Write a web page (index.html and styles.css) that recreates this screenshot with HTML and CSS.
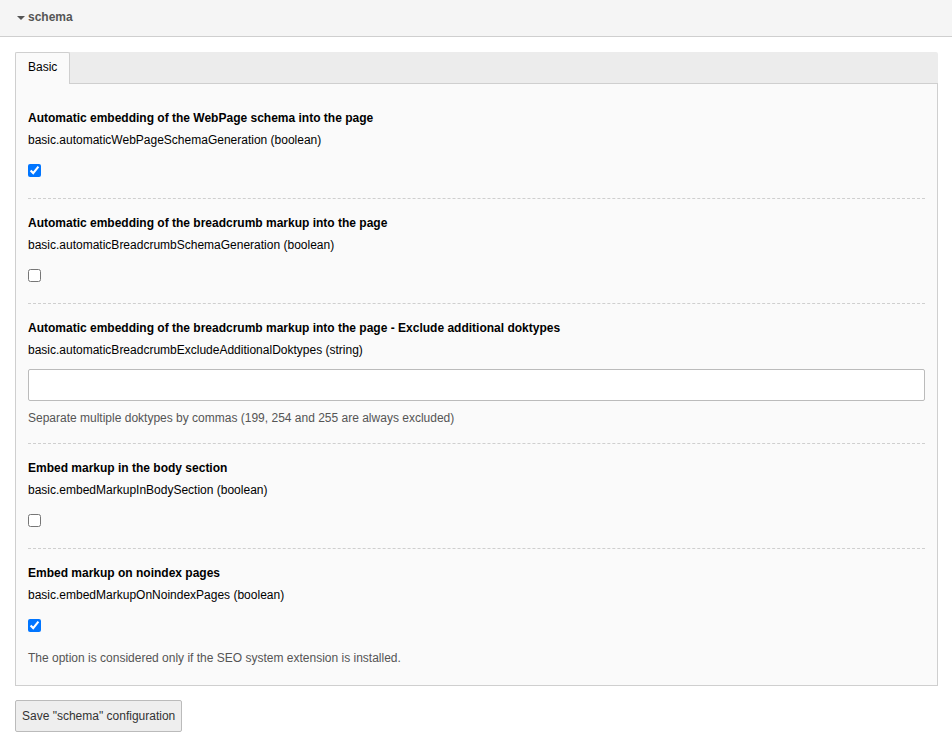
FILE: index.html
```html
<!DOCTYPE html>
<html>
<head>
<meta charset="utf-8">
<link rel="stylesheet" href="styles.css">
</head>
<body>
<div class="header"><span class="caret"></span><span class="header-title">schema</span></div>
<div class="main">
  <div class="tabs">
    <div class="tab-strip"><div class="tab">Basic</div></div>
    <div class="panel">
      <div class="section">
        <div class="title">Automatic embedding of the WebPage schema into the page</div>
        <div class="name">basic.automaticWebPageSchemaGeneration (boolean)</div>
        <input class="check" type="checkbox" checked>
      </div>
      <div class="section">
        <div class="title">Automatic embedding of the breadcrumb markup into the page</div>
        <div class="name">basic.automaticBreadcrumbSchemaGeneration (boolean)</div>
        <input class="check" type="checkbox">
      </div>
      <div class="section">
        <div class="title">Automatic embedding of the breadcrumb markup into the page - Exclude additional doktypes</div>
        <div class="name">basic.automaticBreadcrumbExcludeAdditionalDoktypes (string)</div>
        <input class="text" type="text">
        <div class="help help-input">Separate multiple doktypes by commas (199, 254 and 255 are always excluded)</div>
      </div>
      <div class="section">
        <div class="title">Embed markup in the body section</div>
        <div class="name">basic.embedMarkupInBodySection (boolean)</div>
        <input class="check" type="checkbox">
      </div>
      <div class="section last">
        <div class="title">Embed markup on noindex pages</div>
        <div class="name">basic.embedMarkupOnNoindexPages (boolean)</div>
        <input class="check" type="checkbox" checked>
        <div class="help help-check">The option is considered only if the SEO system extension is installed.</div>
      </div>
    </div>
  </div>
  <button class="save">Save "schema" configuration</button>
</div>
</body>
</html>
```
FILE: styles.css
```css
html, body {
  margin: 0;
  padding: 0;
  background: #fff;
  font-family: "Liberation Sans", Arial, sans-serif;
  font-size: 12px;
  color: #000;
}
.header {
  height: 36px;
  background: #f5f5f5;
  border-bottom: 1px solid #cfcfcf;
  display: flex;
  align-items: center;
  padding-left: 17px;
  box-sizing: content-box;
}
.caret {
  width: 0;
  height: 0;
  border-left: 4px solid transparent;
  border-right: 4px solid transparent;
  border-top: 4px solid #555;
  margin-right: 3px;
}
.header-title {
  font-weight: bold;
  color: #555;
  font-size: 12px;
  margin-top: -2px;
}
.main {
  padding: 15px 14px 0 15px;
}
.tabs {
  display: flex;
  flex-direction: column;
}
.tab-strip {
  background: #ececec;
  height: 31px;
  border-bottom: 1px solid #cfcfcf;
  border-top-right-radius: 2px;
  display: flex;
  align-items: flex-end;
}
.tab {
  background: #fafafa;
  border: 1px solid #cfcfcf;
  border-bottom: none;
  border-top-left-radius: 2px;
  border-top-right-radius: 2px;
  height: 32px;
  margin-bottom: -1px;
  box-sizing: border-box;
  padding: 0 12px 3px;
  display: flex;
  align-items: center;
  color: #000;
}
.panel {
  background: #fafafa;
  border: 1px solid #cfcfcf;
  border-top: none;
  padding: 10px 12px 10px 12px;
}
.section {
  display: flex;
  flex-direction: column;
  align-items: flex-start;
  padding: 15px 0 20px;
  border-bottom: 1px dashed #cfcfcf;
}
.section.last {
  border-bottom: none;
  padding-bottom: 8px;
}
.title {
  font-weight: bold;
  line-height: 18px;
  margin-bottom: 4px;
}
.name {
  line-height: 18px;
}
.check {
  width: 13px;
  height: 13px;
  margin: 15px 0 0 0;
}
.text {
  margin-top: 10px;
  width: 100%;
  height: 32px;
  box-sizing: border-box;
  border: 1px solid #bbb;
  border-radius: 2px;
  background: #fff;
  font-family: inherit;
  font-size: 12px;
  padding: 4px 8px;
}
.help {
  color: #555;
  line-height: 18px;
}
.help-input {
  margin-top: 8px;
  margin-bottom: -4px;
}
.help-check {
  margin-top: 16px;
}
.section .check {
  margin-bottom: 1px;
}
.save {
  margin-top: 14px;
  height: 32px;
  padding: 0 6px;
  background: #eee;
  border: 1px solid #bbb;
  border-radius: 2px;
  font-family: "Liberation Sans", Arial, sans-serif;
  font-size: 12px;
  color: #333;
  white-space: nowrap;
}
```
